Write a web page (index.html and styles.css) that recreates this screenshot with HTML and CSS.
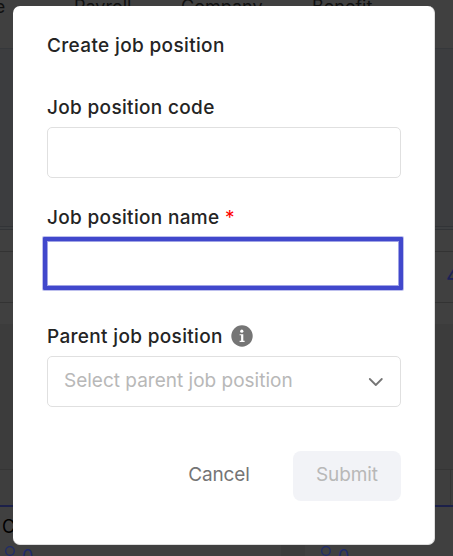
FILE: index.html
```
<!DOCTYPE html>
<html lang="en">
<head>
    <meta charset="UTF-8">
    <meta name="viewport" content="width=device-width, initial-scale=1.0">
    <title>Create job position</title>
    <link rel="stylesheet" href="styles.css">
</head>
<body>

<!-- Page behind the dialog -->
<div class="page">
    <nav class="navbar">
        <span class="nav-time">Time</span>
        <span class="nav-payroll">Payroll</span>
        <span class="nav-company">Company</span>
        <span class="nav-benefit">Benefit</span>
    </nav>
    <div class="banner"></div>
    <div class="strip"></div>
    <div class="summary">
        <div class="summary-space"></div>
        <div class="summary-count">4</div>
        <div class="summary-space"></div>
    </div>
    <div class="spacer"></div>
    <div class="toolbar">
        <div class="toolbar-cell"></div>
    </div>
    <div class="cards">
        <div class="card">
            <div class="card-title">C</div>
            <div class="card-count">
                <svg width="12" height="18" viewBox="0 0 12 18" fill="none" stroke="currentColor" stroke-width="1.3"><circle cx="6" cy="5" r="4.3"/><path d="M1 17c0-7 10-7 10 0"/></svg>
                <span>0</span>
            </div>
        </div>
        <div class="card">
            <div class="card-title"></div>
            <div class="card-count">
                <svg width="12" height="18" viewBox="0 0 12 18" fill="none" stroke="currentColor" stroke-width="1.3"><circle cx="6" cy="5" r="4.3"/><path d="M1 17c0-7 10-7 10 0"/></svg>
                <span>0</span>
            </div>
        </div>
    </div>
</div>

<!-- Dialog -->
<form class="modal">
    <h1>Create job position</h1>

    <div class="field field-code">
        <label for="code">Job position code</label>
        <input type="text" id="code">
    </div>

    <div class="field field-name">
        <label for="name">Job position name <span class="required">*</span></label>
        <input type="text" id="name" class="highlight">
    </div>

    <div class="field field-parent">
        <label>Parent job position
            <svg class="info" width="22" height="22" viewBox="0 0 22 22"><circle cx="11" cy="11" r="10.7" fill="#757575"/><circle cx="10.8" cy="6.2" r="1.6" fill="#fff"/><path d="M8.6 9.2h3.7v6.6h1.3v1.1h-5v-1.1h1.5v-5.5H8.6z" fill="#fff"/></svg>
        </label>
        <div class="select">
            <span>Select parent job position</span>
            <svg width="16" height="10" viewBox="0 0 16 10" fill="none" stroke="#757575" stroke-width="1.8" stroke-linecap="round" stroke-linejoin="round"><path d="M1.8 2l6 6 6-6"/></svg>
        </div>
    </div>

    <div class="actions">
        <button type="button" class="cancel">Cancel</button>
        <button type="submit" class="submit" disabled>Submit</button>
    </div>
</form>

</body>
</html>
```
FILE: styles.css
```
* {
    margin: 0;
    padding: 0;
    box-sizing: border-box;
}

body {
    font-family: 'Inter', sans-serif;
    font-size: 18px;
    height: 100vh;
    overflow: hidden;
    position: relative;
    background: #3c3c3c;
}

.page {
    height: 556px;
    overflow: hidden;
    color: #101010;
}

.navbar {
    height: 49px;
    background: #404040;
    border-bottom: 1px solid #36383b;
    display: flex;
    line-height: 22px;
    white-space: nowrap;
}

.navbar span {
    margin-top: -4px;
    flex-shrink: 0;
}

.nav-time {
    width: 74px;
    margin-left: -37px;
}

.nav-payroll {
    width: 107px;
    margin-left: 37px;
}

.nav-company {
    width: 131px;
}

.banner {
    height: 178px;
    background: #3c3d3f;
    border-bottom: 1px solid #323437;
}

.strip {
    height: 3px;
    background: #3d3f41;
    border-bottom: 1px solid #323437;
}

.summary {
    height: 94px;
    background: #404040;
}

.summary-space {
    height: 21px;
}

.summary-count {
    height: 52px;
    border-top: 1px solid #333;
    border-bottom: 1px solid #333;
    padding-left: 446px;
    font-size: 22px;
    line-height: 46px;
    color: #1c2156;
}

.spacer {
    height: 145px;
    background: #3c3c3c;
}

.toolbar {
    height: 38px;
    background: #3e3e3e;
    border-top: 1px solid #353535;
    border-bottom: 2px solid #1c2049;
}

.toolbar-cell {
    width: 451px;
    height: 35px;
    border-right: 1px solid #353535;
}

.cards {
    height: 49px;
    display: flex;
    gap: 24px;
}

.card {
    background: #404040;
    overflow: hidden;
    flex-shrink: 0;
    width: 281px;
    padding: 9px 2px;
}

.card + .card {
    padding-left: 13px;
}

.card-title {
    height: 22px;
    line-height: 22px;
    color: #000;
}

.card-count {
    display: flex;
    gap: 6px;
    padding-left: 2px;
    line-height: 22px;
    color: #1f2b6c;
}

.card-count svg {
    margin-top: 8px;
}

.card-count span {
    margin-top: 8px;
}

.modal {
    position: absolute;
    top: 6px;
    left: 13px;
    width: 422px;
    height: 539px;
    padding: 29px 33px 0 34px;
    background: #fff;
    border: 1px solid #dedede;
    border-width: 0 1px 1px 0;
    border-radius: 7px;
    color: #242424;
    font-size: 19px;
}

h1 {
    font-size: 19px;
    font-weight: 500;
    line-height: 22px;
    letter-spacing: 0.35px;
}

.field label {
    display: flex;
    align-items: center;
    height: 22px;
    font-weight: 500;
    letter-spacing: 0.33px;
    white-space: pre-wrap;
}

.field input,
.select {
    display: block;
    width: 354px;
    height: 51px;
    border: 1px solid #e0e0e0;
    border-radius: 5px;
    background: #fff;
    outline: none;
}

.field-code {
    margin-top: 39px;
}

.field-code input {
    margin-top: 9px;
}

.field-name {
    margin-top: 28px;
}

.required {
    color: #f00;
    font-weight: 400;
}

.field-name .highlight {
    width: 360px;
    height: 53px;
    margin: 9px 0 0 -4px;
    border: 4px solid #4148cc;
    border-radius: 1px;
    box-shadow: 0 0 0 1px rgba(65, 72, 204, 0.35), inset 0 0 0 1px rgba(65, 72, 204, 0.5);
}

.field-parent {
    margin-top: 35px;
}

.field-parent label {
    white-space: normal;
}

.info {
    margin-left: 8px;
}

.select {
    display: flex;
    align-items: center;
    justify-content: space-between;
    margin-top: 9px;
    padding: 0 16px;
    color: #b8b8b8;
}

.select span {
    margin-top: -2px;
}

.actions {
    display: flex;
    justify-content: flex-end;
    margin-top: 44px;
}

.actions button {
    height: 50px;
    padding-bottom: 3px;
    border: none;
    border-radius: 8px;
    background: none;
    font-family: inherit;
    font-size: 19px;
    letter-spacing: -0.1px;
    color: #757575;
}

.actions .cancel {
    width: 104px;
    margin-right: 22px;
}

.actions .submit {
    width: 108px;
    background: #f2f3f7;
    color: #b8b8b8;
}
```
